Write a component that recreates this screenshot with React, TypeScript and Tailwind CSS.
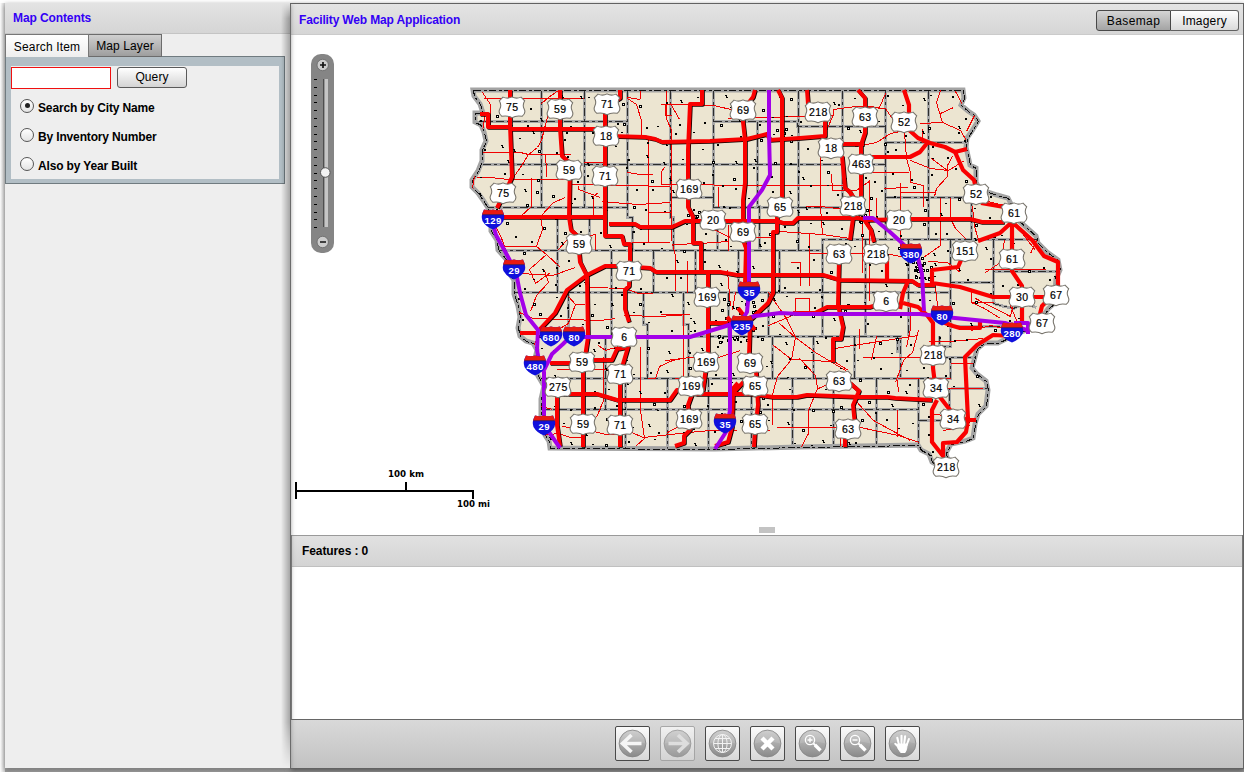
import React from 'react';

const OUTLINE =
  'M473 90 L963 90 L964 98 L961 105 L968 111 L974 115 L978 121 L972 131 L967 138 L966 147 L969 160 L970 165 L976 168 L976 182 L979 188 L985 191 L997 195 L1008 198 L1012 206 L1019 221 L1027 228 L1036 236 L1038 243 L1047 252 L1058 260 L1060 270 L1056 279 L1055 291 L1059 299 L1048 309 L1039 322 L1033 328 L1018 333 L1008 338 L998 343 L984 343 L977 349 L975 357 L972 368 L977 374 L986 381 L988 390 L986 406 L978 414 L975 424 L973 438 L965 441 L951 444 L946 453 L949 465 L941 467 L932 462 L929 454 L921 450 L918 445 L800 447 L715 449 L550 448 L549 441 L545 435 L546 426 L541 417 L541 399 L544 386 L538 376 L534 363 L537 350 L533 343 L526 341 L520 336 L518 328 L520 317 L518 306 L514 294 L514 280 L506 269 L507 260 L498 250 L497 240 L491 231 L491 220 L488 208 L483 200 L478 193 L472 187 L472 180 L478 171 L482 161 L482 150 L486 141 L484 132 L481 125 L475 122 L475 113 L483 113 L480 104 L474 96 Z';

const COUNTIES = [
  'M478 121H627 M713 121H797V126H885 M482 164H842 M860 164H885 M885 142H967 M485 207H627V217H632V250 M670 197H713V207H842V197 M885 197H972',
  'M498 250H822V239H1038 M514 292H950V282H993V271H1056 M993 303L1004 306L1013 308L1024 303L1036 307 M688 336H900V378 M937 346H950V326H1014',
  'M541 378H950V357 M939 357H976 M939 335V357 M950 388H988 M541 409H918 M918 420H949V388',
  'M541 90V206 M584 90V206 M627 90V206 M670 90V217H673V250 M713 90V206 M757 121V206H759V250 M798 90V250 M842 90V206 M885 90V239 M928 90V239 M971 197V239',
  'M557 217V292 M589 217V250 M717 217V250 M611 250V292 M653 250V292 M695 250V292 M738 250V292 M779 250V292 M822 250V336 M865 239V335 M908 239V335 M950 239V326 M993 239V303',
  'M568 292V336 M611 292V336 M643 292V324H647V378 M683 292V324H688V378 M728 292V336 M768 292V336 M605 336V409 M772 336V378 M813 336V378 M854 336V378 M897 335V352',
  'M584 378V448 M625 378V448 M667 378V448 M708 378V448 M751 378V448 M792 378V448 M833 378V448 M876 378V446 M918 378V445',
];

const MINOR = [
  'M482 92L490 104V124 M483 98H583 M541 103L548 97L558 90 M560 101L548 113L545 124L541 140L537 147L528 154L522 164L508 184 M482 152H520L528 154H570',
  'M545 155L546 170V176 M476 177H490L508 179H566 M531 177V206L520 216 M540 216L553 202L565 197 M540 216L542 229L536 246H500 M536 246L546 254L560 267 M546 254L529 269L535 283L550 272',
  'M557 250L566 240L577 238L595 234V249 M571 184L626 185L670 186 M578 185V189L600 197 M593 217V196L598 192 M602 201L612 202L638 204L670 202 M583 162L604 162 M627 172L640 174L652 174',
  'M640 99L627 97 M627 98L636 104L641 120V136 M648 137V242 M648 212H670 M664 167L661 171V184H713 M631 242H669 M640 90V98 M666 90V118L671 130V240 M660 104H690L713 105L735 110 M665 103V115H671',
  'M728 118L833 115L833 109L855 106L885 108 M713 185H842 M718 186L718 206 M728 224V250 M673 244L700 243L728 241 M672 244L675 255V290 M687 260V292 M713 229L730 237L770 237',
  'M832 116L820 145V206L822 235 M831 174L832 190H856L870 180 M805 206H820L845 209 M779 231L822 234L850 238 M809 232V285 M809 253H885L910 258 M790 262L800 262V285 M670 103L679 119',
  'M885 108L893 120L901 130 M885 93L879 107L868 106 M940 90L936 102L939 112L942 122L920 123 M942 122L960 130L966 140 M953 107L940 113 M955 91L962 104L976 111L966 131',
  'M855 146L876 142L890 133L904 130 M904 132L906 158L910 172V182L923 185V206 M860 172H908 M910 160L930 168L948 170L964 160 M952 156L947 165V176L936 188L934 196 M884 188L908 187 M900 182V250 M900 192H935',
  'M862 190V272 M869 179V300 M922 128V142 M931 158L947 170 M876 197V220 M940 197V245L923 257 M950 197L950 218L955 228L966 239 M972 206L974 226L978 239 M971 197L1004 205 M1012 220L1035 250 M1036 240L1030 253 M1004 240L1000 262L985 272',
  'M514 310L533 318L600 320L615 318 M568 296L575 304H584 M575 304L568 323L556 330 M530 311L536 295L548 282L544 270 M520 273L552 275L575 267 M590 287L625 288L638 293L652 293 M624 315L658 316L690 314 M603 356V400L596 417',
  'M556 369H610L620 366 M640 346V410L644 438L636 445 M598 345L605 350L618 346 M647 378H655L659 366L672 360L688 357 M660 314H683V378H674 M665 270H687V292 M665 360L690 357H718L740 350 M541 435L558 433L570 437H584',
  'M562 426L590 430L605 434H625 M624 429L643 437L688 432L710 430 M667 432L682 424 M727 270L730 306 M735 292L732 310 M768 292L786 318L795 337L815 352L850 373 M779 323L795 337L791 359L777 376L772 394V424',
  'M799 358L815 375L817 388 M791 359L830 361L833 355 M773 345L790 358 M832 360L848 370 M817 388L808 410V433L800 448 M818 388L840 378 M776 427L840 427V446 M745 427L770 430 M708 430H736',
  'M795 312V298H809V310 M768 325L792 315 M859 328V348 M834 348L885 340L918 335 M862 357H919 M876 336L871 360 M897 380L898 392 M855 400L873 420L895 432L910 440',
  'M895 382L903 360L912 352L918 330 M840 424L855 426L898 435L919 442 M897 409V436 M925 378H950 M946 388H982 M930 413L955 417 M943 430L970 425 M897 378H919 M910 328L906 347 M928 341L950 341L983 338',
  'M910 306V330 M935 287L937 305L943 316 M971 290V302H993 M971 302L984 308L1000 318 M1010 305L1020 330 M1012 330L990 325L971 330 M950 363H975 M975 298L1010 316L1014 298 M928 261L947 262L960 272 M984 269H1045',
  'M485 113L472 187L490 215L502 240L512 270 M541 406L552 409 M541 332L533 345',
];

const OUTLINED = [
  'M480 114H488V127L508 127L512 129H604 M510 90V125L512 177L508 186L497 208 M560 90V128L562 156L570 163L569 217L571 230L582 240 M620 90V98L615 101 M605 104V236H622L624 244H630V264L629 286L625 290V309L629 322',
  'M610 136L645 137L655 139L662 142L710 141L747 139L767 134L770 140L800 138L825 136V118 M702 90V104H690L688 150V207L693 217V243H701V272 M497 217H604',
  'M755 90L753 97L743 110V122L745 140V183L743 200V240L746 248L745 285 M778 90L782 98V198L777 213V232H773V293L768 303L750 320L749 357 M748 377L733 393L732 427L728 442L715 446',
  'M807 90L808 104 M858 90L865 98V133L861 145V204 M841 144H864 M842 156L845 188L850 192L856 204 M853 218L850 240',
  'M578 240L580 262L587 276L588 337L583 370V447 M539 330L555 313L567 290L587 275L605 266H620L650 268L656 272L720 272L737 275H823L840 280L912 281L918 285L935 285',
  'M609 224H635L640 227H672L685 221L777 221L783 223H793L798 218H858L867 220L910 219H970L982 222H1004',
  'M550 363H571 M592 360H612L617 349L628 347L620 374V447 M708 272V352L703 390L692 394L688 405L690 430L684 436V443L675 446',
  'M557 382V425L560 446 M557 394H597L617 400H670L677 390L697 394H750L773 397H797L807 395L860 397L887 397L895 398L932 400',
  'M839 260L838 305L843 327L841 339H833V362 M850 383L859 391L853 405L855 425 M845 437V447 M756 370L758 405L755 430L754 447 M793 313H815L827 307H870L884 303 M708 323H728 M863 218L871 230L874 242',
];

const MAJOR = [
  'M904 90L909 105L909 130L918 138L930 143L945 147L955 152L967 149 M955 152L963 170L974 180L977 193 M981 203L1004 207 M870 157H910L920 152L928 142 M887 256V281 M908 281L903 293L900 309',
  'M1012 222L1032 240L1044 256L1058 262L1058 290L1042 306L1038 322 M1012 222V271L1022 286V322 M1012 222L1000 233L978 241 M962 258L958 267L932 270V283L960 287L993 297H1045',
  'M903 303L918 307L927 315L933 323V340V368L936 392L950 410L968 421 M1012 336L993 335L977 345L965 357L968 420L966 432L957 442L943 443V456L932 442V410L937 400 M966 420H976',
  'M940 321L953 326L960 328H980V321 M520 333H537 M738 308L755 330 M848 190L858 203 M727 317L742 334 M730 392L738 383',
];

const PURPLE = [
  'M769 90V133L770 175L762 190L749 207V290L747 312L740 323L730 328V410L726 432L715 449',
  'M491 217L496 235L507 255L516 272L520 293L526 315L538 330L537 350L540 366L544 372V425L560 448',
  'M544 370L552 354L563 344L570 337H690L726 326L755 316L780 313L800 314L920 314L945 317L975 320L1005 323L1030 331 M1014 323H1028V334',
  'M863 218H873L890 232L902 243L918 258L922 274L924 311',
];

const US: [string, number, number][] = [
  ['75', 512, 107], ['59', 560, 109], ['71', 607, 104], ['18', 606, 136], ['69', 743, 110], ['218', 818, 112], ['63', 865, 117], ['52', 904, 122],
  ['18', 831, 148], ['463', 861, 164], ['59', 569, 170], ['71', 605, 176], ['75', 503, 193], ['169', 689, 189], ['65', 780, 207], ['218', 853, 206],
  ['52', 976, 194], ['61', 1014, 213], ['20', 713, 220], ['69', 743, 232], ['20', 899, 220], ['59', 579, 244], ['71', 629, 271], ['63', 839, 254],
  ['218', 876, 254], ['151', 965, 251], ['61', 1012, 259], ['169', 707, 297], ['6', 886, 301], ['30', 1022, 297], ['67', 1056, 295], ['67', 1042, 323],
  ['6', 624, 337], ['59', 582, 362], ['71', 620, 374], ['169', 706, 362], ['69', 750, 363], ['218', 933, 355], ['275', 558, 387], ['169', 691, 386],
  ['65', 755, 386], ['63', 839, 381], ['34', 936, 388], ['59', 583, 424], ['71', 620, 425], ['169', 689, 419], ['65', 755, 424], ['63', 848, 429],
  ['34', 953, 419], ['218', 946, 467],
];

const INTERSTATE: [string, number, number][] = [
  ['129', 493, 219], ['29', 514, 269], ['380', 911, 253], ['35', 749, 291], ['235', 742, 325], ['680', 551, 336], ['80', 574, 336],
  ['480', 535, 365], ['29', 544, 425], ['35', 725, 423], ['80', 942, 315], ['280', 1012, 332],
];

function makeTowns() {
  const towns: { x: number; y: number; kind: number }[] = [];
  let seed = 7319;
  const next = () => (seed = (seed * 16807) % 2147483647) / 2147483647;
  for (let gy = 94; gy < 465; gy += 18) {
    for (let gx = 476; gx < 1058; gx += 18) {
      towns.push({ x: Math.round(gx + next() * 16), y: Math.round(gy + next() * 16), kind: Math.floor(next() * 5) });
    }
  }
  const metros = [[740, 320, 22, 46], [924, 271, 10, 24], [784, 133, 9, 12], [857, 213, 9, 12], [914, 262, 8, 8], [694, 213, 6, 7]];
  metros.forEach(([cx, cy, r, n]) => {
    for (let i = 0; i < n; i++) {
      towns.push({ x: Math.round(cx + (next() - 0.5) * 2 * r), y: Math.round(cy + (next() - 0.5) * 2 * r), kind: i % 2 ? 0 : Math.floor(next() * 5) });
    }
  });
  return towns;
}
const TOWNS = makeTowns();

function StateMap() {
  return (
    <svg className="block h-[500px] w-[952px]" viewBox="291 35 952 500" fill="none" fontFamily="'Liberation Sans', Arial, sans-serif">
      <defs>
        <clipPath id="state"><path d={OUTLINE} /></clipPath>
      </defs>
      <path d={OUTLINE} fill="#ece5d1" stroke="#a3a3a3" strokeWidth="5" />
      <g shapeRendering="crispEdges">
        <g clipPath="url(#state)">
          {COUNTIES.map((d) => <path key={d} d={d} stroke="#a8a8a8" strokeWidth="3" transform="translate(.5 .5)" />)}
          {COUNTIES.map((d) => <path key={d} d={d} transform="translate(.5 .5)" stroke="#2c2c2c" strokeWidth="1" strokeDasharray="8 3 3 3" />)}
        </g>
        <path d={OUTLINE} transform="translate(.5 .5)" stroke="#111" strokeWidth="1" strokeDasharray="7 3 3 2" />
        <g clipPath="url(#state)">
          {MINOR.map((d) => <path key={d} d={d} transform="translate(.5 .5)" stroke="#f00000" strokeWidth="1" />)}
          {TOWNS.map((t, i) =>
            t.kind === 0 ? (
              <rect key={i} x={t.x + 0.5} y={t.y + 0.5} width="2" height="2" fill="#fff" stroke="#000" />
            ) : t.kind === 1 ? (
              <path key={i} d={`M${t.x} ${t.y}h2v2h1v1h-2v-2h-1z`} fill="#000" />
            ) : (
              <rect key={i} x={t.x} y={t.y} width="2" height={t.kind === 2 ? 1 : 2} fill="#000" />
            ),
          )}
        </g>
      </g>
      <g strokeLinejoin="round">
        {OUTLINED.map((d) => <path key={d} d={d} stroke="#100" strokeWidth="4" transform="translate(.8 .7)" />)}
        {OUTLINED.map((d) => <path key={d} d={d} stroke="#fa0000" strokeWidth="4" />)}
        {MAJOR.map((d) => <path key={d} d={d} stroke="#fa0000" strokeWidth="4.2" />)}
        {PURPLE.map((d) => <path key={d} d={d} stroke="#a300e8" strokeWidth="4" />)}
      </g>
      {US.map(([n, x, y]) => (
        <g key={`${n}-${x}-${y}`} transform={`translate(${x} ${y})`}>
          <path
            transform="scale(1.06 1.04)"
            d="M-8.5 -9.5Q-4 -7.5 0 -9.7Q4 -7.5 8.5 -9.5L12 -6Q9.5 -2 11.5 2Q13.5 6 9.5 9Q4 8 0 10.3Q-4 8 -9.5 9Q-13.5 6 -11.5 2Q-9.5 -2 -12 -6Z"
            fill="#fff" stroke="#77736b" strokeWidth="1"
          />
          <text x="0.3" y="4" textAnchor="middle" fontSize="10.5" fill="#000" stroke="#000" strokeWidth=".2" letterSpacing=".4">{n}</text>
        </g>
      ))}
      {INTERSTATE.map(([n, x, y]) => (
        <g key={`i${n}-${x}`} transform={`translate(${x} ${y})`}>
          <path d="M-9 -9.5Q-4 -8 0 -9.5Q4 -8 9 -9.5Q12.5 -3 10.5 2Q7 8 0 10.5Q-7 8 -10.5 2Q-12.5 -3 -9 -9.5Z" fill="#1010dc" />
          <path d="M-9 -9.5Q-4 -8 0 -9.5Q4 -8 9 -9.5L11 -4.5H-11Z" fill="#e81a10" />
          <path d="M-10.5 -4.3H10.5" stroke="#50202c" strokeWidth=".7" />
          <text x="0.2" y="4.8" textAnchor="middle" fontSize="9.6" fontWeight="bold" fill="#fff" letterSpacing=".4">{n}</text>
        </g>
      ))}
      <path d="M296 482V499M296 491H474M406 482V491M473 490V499" stroke="#000" strokeWidth="2" shapeRendering="crispEdges" />
      <g fontFamily="'DejaVu Sans', Verdana, sans-serif" fontWeight="bold" fontSize="9" fill="#000">
        <text x="388" y="477" textLength="36" lengthAdjust="spacingAndGlyphs">100 km</text>
        <text x="457" y="507" textLength="33" lengthAdjust="spacingAndGlyphs">100 mi</text>
      </g>
    </svg>
  );
}

function ZoomSlider() {
  return (
    <svg className="absolute left-[20px] top-[19px] h-[200px] w-[24px]" viewBox="0 0 24 200">
      <rect width="23" height="199" rx="10" fill="#858585" />
      <g fill="#ccc" stroke="#666" strokeWidth=".8">
        <circle cx="11.7" cy="11" r="5.7" />
        <circle cx="11.7" cy="188" r="5.7" />
      </g>
      <path d="M9 11H15M12 8V14M9 188H15" stroke="#111" strokeWidth="1.7" />
      <g fill="#000" shapeRendering="crispEdges">
        {Array.from({ length: 20 }, (_, i) => <rect key={i} x="3" y={Math.round(25 + i * 7.8)} width="3" height="1" />)}
      </g>
      <rect x="12" y="25" width="5" height="148" fill="#c5c5c5" />
      <rect x="12" y="25" width="1.4" height="148" fill="#4e4e4e" />
      <circle cx="14.3" cy="118.5" r="4.8" fill="#f3f3f3" stroke="#555" />
    </svg>
  );
}

function Glyph({ name }: { name: string }) {
  switch (name) {
    case 'Previous extent':
      return <path d="M27 18H8.5M17 9.5L8 18L17 26.5" stroke="#f5f5f5" strokeWidth="3.6" />;
    case 'Next extent':
      return <path d="M9 18H27M18.5 9.5L27.5 18L18.5 26.5" stroke="#e3e3e3" strokeWidth="3.6" />;
    case 'Full extent':
      return (
        <g stroke="#f2f2f2" strokeWidth="1">
          <circle cx="18" cy="18" r="9" />
          <ellipse cx="18" cy="18" rx="4.6" ry="9" />
          <path d="M18 9V27M9 18H27M10.5 13H25.5M10.5 23H25.5" />
        </g>
      );
    case 'Clear':
      return <path d="M12.5 12.5L23.5 23.5M23.5 12.5L12.5 23.5" stroke="#fff" strokeWidth="4.4" />;
    case 'Zoom in':
    case 'Zoom out':
      return (
        <g stroke="#fff">
          <circle cx="15.5" cy="14.5" r="4.6" strokeWidth="1.3" />
          <path d="M19 18L21 20" strokeWidth="1.8" />
          <path d="M20.5 19.5L26 25" strokeWidth="3.3" />
          <path d={name === 'Zoom in' ? 'M13 14.5H18M15.5 12V17' : 'M13 14.5H18'} strokeWidth="1.4" />
        </g>
      );
    default:
      return (
        <g stroke="#fff" strokeLinecap="round" strokeWidth="2.1">
          <path d="M14.4 19L12.8 12.3M17 18V10.2M19.7 18L20.6 10.8M22.2 19.5L24.4 13.5M14.5 22L10.8 18.3" />
          <path d="M13.5 18.5H22.8L22 24L20.6 27H16.2L13.5 23Z" fill="#fff" strokeWidth="1" />
        </g>
      );
  }
}

function ToolButton({ name, disabled }: { name: string; disabled?: boolean }) {
  return (
    <button
      aria-label={name}
      className={`h-[35px] w-[35px] rounded-[2px] border bg-linear-to-b from-[#fafafa] to-[#d8d8d8] ${disabled ? 'border-[#999] opacity-75' : 'border-[#494949]'}`}
    >
      <svg viewBox="1.5 1.5 33 33" className="block h-[33px] w-[33px]" fill="none">
        <defs>
          <linearGradient id="disc" x1="0" y1="0" x2="0" y2="1">
            <stop offset="0" stopColor="#c9c9c9" />
            <stop offset=".55" stopColor="#a7a7a7" />
            <stop offset="1" stopColor="#8a8a8a" />
          </linearGradient>
        </defs>
        <circle cx="18" cy="18" r="13.4" fill="url(#disc)" stroke="#858585" strokeWidth=".8" />
        <path d="M5.3 18A12.7 12.7 0 0 1 30.7 18Q18 14 5.3 18Z" fill="#fff" opacity=".12" />
        <Glyph name={name} />
      </svg>
    </button>
  );
}

function Radio({ label, checked }: { label: string; checked?: boolean }) {
  return (
    <label className="flex h-[29px] items-center">
      <span className="mr-[4px] flex h-[14px] w-[14px] -translate-y-px items-center justify-center rounded-full border border-[#555] bg-linear-to-b from-white to-[#e4e4e4]">
        {checked && <span className="h-[5px] w-[5px] rounded-full bg-[#222]" />}
      </span>
      <span className="pt-[2px] text-[12px] font-bold leading-none tracking-[-0.15px]">{label}</span>
    </label>
  );
}

export default function App() {
  return (
    <div className="flex h-[772px] w-[1244px] overflow-hidden bg-linear-to-b from-white from-[98%] to-[#9a9a9a] to-[99.7%] pt-[3px] font-['Liberation_Sans',Arial,sans-serif] text-[12px] text-black">
      <div className="h-[769px] w-[5px] shrink-0 bg-linear-to-r from-white to-[#d0d0d0]" />
      <aside className="relative h-[765px] w-[285px] shrink-0 bg-[#eee] shadow-[0_2px_5px_#777]">
        <header className="flex h-[31px] items-center border-b border-[#c4c4c4] bg-linear-to-b from-[#e3e3e3] to-[#d5d5d5] pl-[8px] font-bold tracking-[-0.1px] text-[#3300f5]">Map Contents</header>
        <div className="flex h-[22px]">
          <div className="z-10 flex h-[23px] w-[84px] items-center justify-center border border-b-0 border-[#777] bg-linear-to-b from-white to-[#eee] pt-[2px] tracking-[0.15px]">Search Item</div>
          <div className="-ml-px flex h-[23px] w-[74px] items-center justify-center border border-[#6c6c6c] bg-linear-to-b from-[#d0d0d0] to-[#9e9e9e] tracking-[0.1px]">Map Layer</div>
        </div>
        <div className="h-[128px] w-[280px] border border-[#707b80] bg-[#b2bec5] px-[5px] pb-[4px] pt-[9px]">
          <div className="h-[113px] w-[268px] bg-[#eee]">
            <div className="flex pt-px">
              <input aria-label="Search text" className="h-[22px] w-[100px] border border-[#f01010] bg-white outline-none" />
              <button className="ml-[6px] h-[21px] w-[70px] rounded-[3px] border border-[#5a5a5a] bg-linear-to-b from-white to-[#d4d4d4] pb-[2px] leading-none tracking-[0.1px]">Query</button>
            </div>
            <div className="pl-[9px] pt-[3px]">
              <Radio label="Search by City Name" checked />
              <Radio label="By Inventory Number" />
              <Radio label="Also by Year Built" />
            </div>
          </div>
        </div>
        <div className="absolute right-0 top-0 h-[765px] w-[9px] bg-linear-to-r from-transparent to-black/30 mask-t-from-98% mask-t-to-100% mask-b-from-94% mask-b-to-100%" />
      </aside>
      <main className="flex h-[766px] w-[954px] shrink-0 flex-col border border-[#626262] bg-white shadow-[0_2px_5px_#555]">
        <header className="flex h-[31px] shrink-0 items-center justify-between border-b border-[#cbcbcb] bg-linear-to-b from-[#e4e4e4] to-[#d6d6d6] pl-[8px] pr-[4px]">
          <h1 className="pt-px font-bold tracking-[-0.15px] text-[#3300f5]">Facility Web Map Application</h1>
          <div className="mt-[3px] flex h-[21px]">
            <button className="w-[75px] rounded-l-[3px] border border-[#484848] bg-linear-to-b from-[#d5d5d5] to-[#a4a4a4] leading-none tracking-[0.4px]">Basemap</button>
            <button className="w-[68px] rounded-r-[3px] border border-l-0 border-[#606060] bg-linear-to-b from-white to-[#dadada] leading-none tracking-[0.2px]">Imagery</button>
          </div>
        </header>
        <section className="relative h-[500px] shrink-0">
          <StateMap />
          <ZoomSlider />
          <div className="absolute left-[468px] top-[492px] h-[6px] w-[16px] bg-[#c3c3c3]" />
        </section>
        <section className="h-[184px] shrink-0 border-x border-[#777]">
          <header className="flex h-[32px] items-center border-y border-t-[#9a9a9a] border-b-[#c0c0c0] bg-linear-to-b from-[#e1e1e1] to-[#d4d4d4] pl-[10px] font-bold tracking-[-0.1px]">Features : 0</header>
        </section>
        <footer className="flex grow items-center justify-center gap-[10px] border-t border-[#666] bg-linear-to-b from-[#d9d9d9] to-[#c2c2c2] pb-[2px]">
          <ToolButton name="Previous extent" />
          <ToolButton name="Next extent" disabled />
          <ToolButton name="Full extent" />
          <ToolButton name="Clear" />
          <ToolButton name="Zoom in" />
          <ToolButton name="Zoom out" />
          <ToolButton name="Pan" />
        </footer>
      </main>
    </div>
  );
}
